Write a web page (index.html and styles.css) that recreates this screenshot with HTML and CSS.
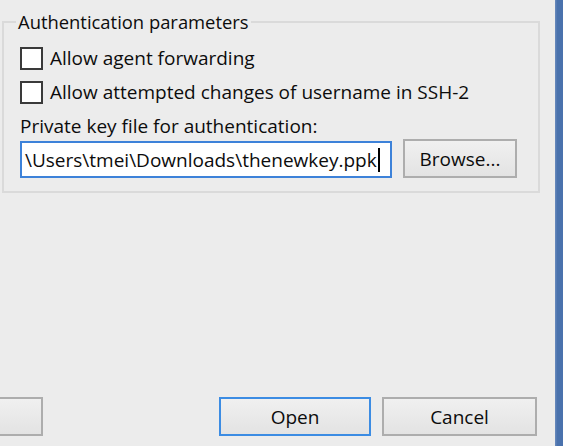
FILE: index.html
```html
<!DOCTYPE html>
<html>
<head>
<meta charset="utf-8">
<link rel="stylesheet" href="styles.css">
</head>
<body>
<div class="window">
  <div class="main">
    <fieldset class="group">
      <legend class="legend">Authentication parameters</legend>
      <label class="check-row"><span class="box"></span><span class="text">Allow agent forwarding</span></label>
      <label class="check-row"><span class="box"></span><span class="text">Allow attempted changes of username in SSH-2</span></label>
      <div class="field-label">Private key file for authentication:</div>
      <div class="file-row">
        <div class="input"><span class="value">\Users\tmei\Downloads\thenewkey.ppk</span><span class="caret"></span></div>
        <div class="btn browse">Browse...</div>
      </div>
    </fieldset>
    <div class="spacer"></div>
    <div class="buttons">
      <div class="btn partial"></div>
      <div class="btn open">Open</div>
      <div class="btn cancel">Cancel</div>
    </div>
  </div>
  <div class="strip"></div>
</div>
</body>
</html>
```
FILE: styles.css
```css
html, body {
  margin: 0;
  padding: 0;
  width: 563px;
  height: 446px;
  overflow: hidden;
  background: #ececec;
  font-family: "Open Sans", "Liberation Sans", sans-serif;
  font-size: 19px;
  color: #0c0c0c;
}
.window {
  display: flex;
  height: 446px;
}
.main {
  width: 555px;
  display: flex;
  flex-direction: column;
}
.strip {
  width: 8px;
  background: linear-gradient(to right, #6a8bbd, #4a72ad 30%, #4a72ad);
}
.group {
  margin: 11px 0 0 2px;
  width: 538px;
  height: 182px;
  box-sizing: border-box;
  border: 2px solid #dadada;
  padding: 0 0 0 16px;
  display: flex;
  flex-direction: column;
}
.legend {
  padding: 0 2px;
  margin-left: -4px;
  line-height: 22px;
  font-size: 18.4px;
}
.check-row {
  display: flex;
  align-items: center;
  gap: 7px;
  height: 34px;
}
.check-row:first-of-type {
  margin-top: 8px;
}
.box {
  width: 23px;
  height: 23px;
  box-sizing: border-box;
  border: 2px solid #3a3a3a;
  background: #fff;
}
.field-label {
  margin-top: 4px;
  line-height: 26px;
}
.file-row {
  display: flex;
  align-items: flex-start;
  gap: 11px;
  margin-top: 0;
}
.input {
  width: 372px;
  height: 37px;
  box-sizing: border-box;
  border: 2px solid #3d82d9;
  background: #fff;
  margin-top: 2px;
  display: flex;
  align-items: center;
  padding-left: 3px;
  white-space: nowrap;
  overflow: hidden;
}
.caret {
  width: 2px;
  height: 24px;
  background: #000;
  margin-left: 1px;
}
.btn {
  box-sizing: border-box;
  border: 2px solid #adadad;
  background: linear-gradient(#f0f0f0, #e3e3e3);
  display: flex;
  align-items: center;
  justify-content: center;
}
.browse {
  width: 114px;
  height: 39px;
}
.spacer {
  flex: 1;
}
.buttons {
  display: flex;
  gap: 11px;
  height: 39px;
  margin-bottom: 10px;
  padding-right: 18px;
}
.partial {
  width: 46px;
  margin-left: -3px;
}
.open {
  margin-left: auto;
  width: 152px;
  border-color: #3c8ce3;
}
.cancel {
  width: 155px;
}
```
